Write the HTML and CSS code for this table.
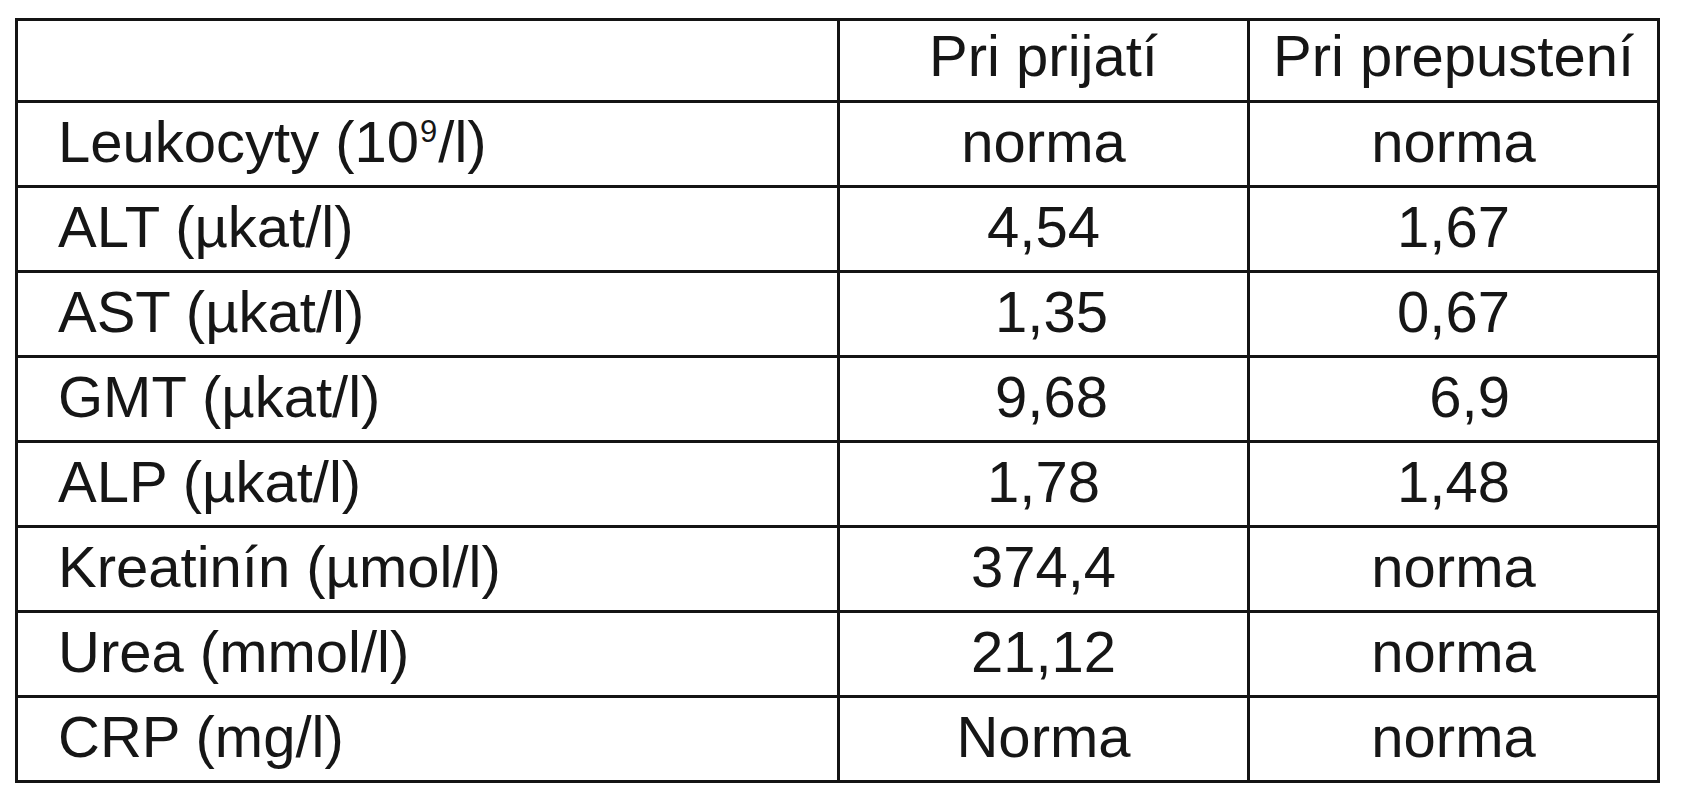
FILE: index.html
```html
<!DOCTYPE html>
<html lang="sk">
<head>
<meta charset="utf-8">
<title>Laboratórne hodnoty</title>
<link rel="stylesheet" href="styles.css">
</head>
<body>
<div class="page">
<table class="lab">
  <colgroup>
    <col class="c-name">
    <col class="c-val">
    <col class="c-val">
  </colgroup>
  <thead>
    <tr class="head">
      <th class="name"></th>
      <th class="val">Pri prijatí</th>
      <th class="val">Pri prepustení</th>
    </tr>
  </thead>
  <tbody>
    <tr><td class="name">Leukocyty (10<span class="sup">9</span>/l)</td><td class="val">norma</td><td class="val">norma</td></tr>
    <tr><td class="name">ALT (µkat/l)</td><td class="val">4,54</td><td class="val">1,67</td></tr>
    <tr><td class="name">AST (µkat/l)</td><td class="val">&nbsp;1,35</td><td class="val">0,67</td></tr>
    <tr><td class="name">GMT (µkat/l)</td><td class="val">&nbsp;9,68</td><td class="val">&nbsp;&nbsp;6,9</td></tr>
    <tr><td class="name">ALP (µkat/l)</td><td class="val">1,78</td><td class="val">1,48</td></tr>
    <tr><td class="name">Kreatinín (µmol/l)</td><td class="val">374,4</td><td class="val">norma</td></tr>
    <tr><td class="name">Urea (mmol/l)</td><td class="val">21,12</td><td class="val">norma</td></tr>
    <tr><td class="name">CRP (mg/l)</td><td class="val">Norma</td><td class="val">norma</td></tr>
  </tbody>
</table>
</div>
</body>
</html>
```

FILE: styles.css
```css
html, body {
  margin: 0;
  padding: 0;
  background: #ffffff;
}

.page {
  padding: 18px 0 0 15px;
}

.lab {
  border-collapse: collapse;
  font-family: "Liberation Sans", Arial, sans-serif;
  font-size: 58px;
  color: #161616;
  table-layout: fixed;
  width: 1645px;
}

.c-name { width: 822px; }
.c-val { width: 410px; }

.lab th,
.lab td {
  border: 3px solid #141414;
  padding: 0 0 4px 0;
  height: 85px;
  box-sizing: border-box;
  vertical-align: middle;
  font-weight: normal;
  line-height: 66px;
  white-space: nowrap;
}

.lab .head th {
  height: 82px;
  padding-bottom: 10px;
}

.lab .name {
  text-align: left;
  padding-left: 40px;
}

.lab .val {
  text-align: center;
}

.sup {
  font-size: 31px;
  position: relative;
  top: -20px;
  line-height: 0;
  margin: 0 1px 0 1px;
}
```
